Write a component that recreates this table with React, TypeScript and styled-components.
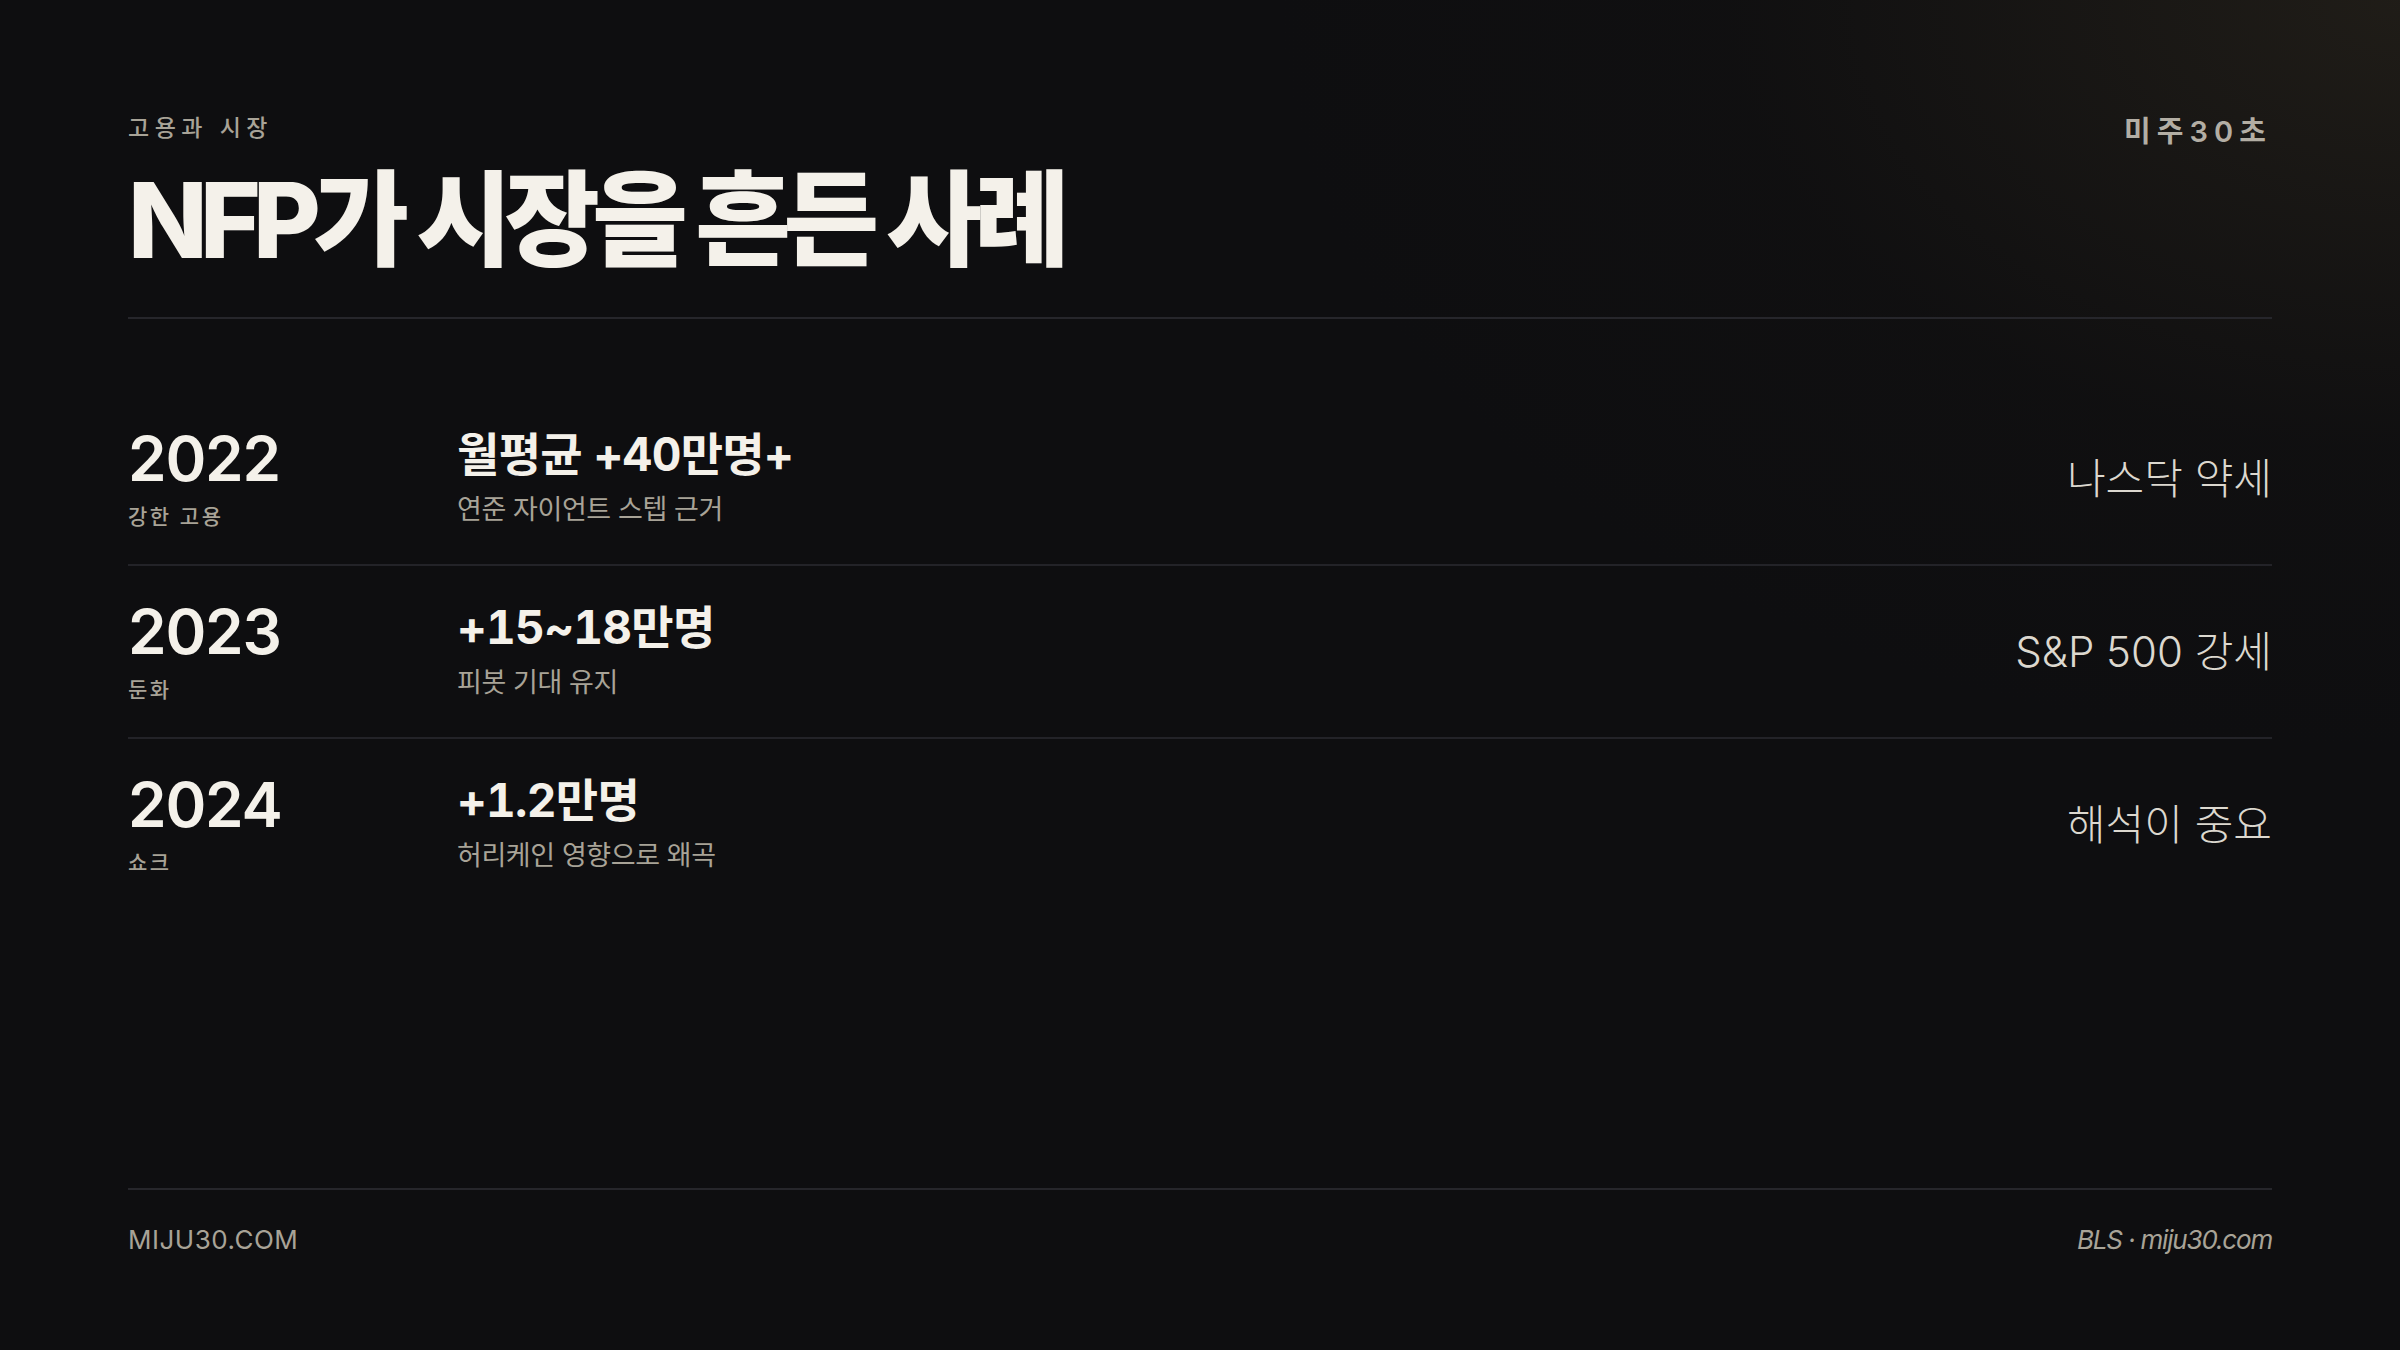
import React from "react";
import styled, { createGlobalStyle } from "styled-components";

const GlobalStyle = createGlobalStyle`
  * { box-sizing: border-box; }
  html, body { margin: 0; padding: 0; background: #0e0e10; }
  body {
    font-family: Inter, "Noto Sans CJK KR", "Noto Sans", sans-serif;
    -webkit-font-smoothing: antialiased;
  }
`;

const Slide = styled.main`
  width: 100%;
  height: 100vh;
  min-height: 1350px;
  display: flex;
  flex-direction: column;
  padding: 115px 128px 95px;
  background:
    radial-gradient(ellipse 1500px 1000px at 100% 0%, rgba(60, 52, 36, 0.38), rgba(30, 26, 20, 0.12) 45%, rgba(14, 14, 16, 0) 75%),
    #0e0e10;
  color: #f4f1ea;
`;

const Header = styled.header`
  display: flex;
  justify-content: space-between;
  align-items: flex-start;
  padding-bottom: 40px;
  border-bottom: 2px solid #26262b;
`;

const HeaderText = styled.div`
  display: flex;
  flex-direction: column;
  gap: 22px;
`;

const Kicker = styled.div`
  font-size: 23px;
  line-height: 26px;
  font-weight: 500;
  letter-spacing: 0.24em;
  color: #a8a397;
`;

const Title = styled.h1`
  margin: 0;
  font-size: 104px;
  line-height: 114px;
  font-weight: 800;
  letter-spacing: -0.074em;
  color: #f4f1ea;
`;

const Brand = styled.div`
  font-size: 29px;
  line-height: 34px;
  font-weight: 600;
  letter-spacing: 0.21em;
  color: #b3aea4;
`;

const Rows = styled.section`
  margin-top: 74px;
  display: flex;
  flex-direction: column;
`;

const Row = styled.div<{ $last?: boolean }>`
  display: grid;
  grid-template-columns: 329px 1fr auto;
  align-items: center;
  padding: 35px 0;
  border-bottom: ${(p) => (p.$last ? "none" : "2px solid #232328")};
`;

const YearCell = styled.div`
  display: flex;
  flex-direction: column;
  gap: 15px;
`;

const Year = styled.div`
  font-size: 62px;
  line-height: 62px;
  font-weight: 600;
  letter-spacing: -0.02em;
  color: #f4f1ea;
`;

const YearLabel = styled.div`
  font-size: 21px;
  line-height: 24px;
  font-weight: 500;
  letter-spacing: 0.12em;
  color: #a8a397;
`;

const FigureCell = styled.div`
  display: flex;
  flex-direction: column;
  gap: 13px;
`;

const Figure = styled.div`
  font-size: 46px;
  line-height: 49px;
  font-weight: 700;
  letter-spacing: -0.015em;
  font-variant-numeric: tabular-nums;
  color: #f4f1ea;
`;

const Note = styled.div`
  font-size: 27px;
  line-height: 36px;
  font-weight: 400;
  letter-spacing: -0.015em;
  color: #a8a397;
`;

const Outcome = styled.div`
  font-size: 42px;
  line-height: 48px;
  font-weight: 300;
  letter-spacing: 0;
  color: #dcd8cf;
  text-align: right;
`;

const Footer = styled.footer`
  margin-top: auto;
  display: flex;
  justify-content: space-between;
  align-items: center;
  padding-top: 34px;
  border-top: 2px solid #26262b;
`;

const Site = styled.div`
  font-size: 26px;
  line-height: 31px;
  font-weight: 400;
  letter-spacing: 0.02em;
  color: #a8a397;
`;

const Source = styled.div`
  font-size: 26px;
  line-height: 31px;
  font-weight: 400;
  font-style: italic;
  letter-spacing: -0.045em;
  color: #a8a397;
`;

const data = [
  { year: "2022", label: "강한 고용", figure: "월평균 +40만명+", note: "연준 자이언트 스텝 근거", outcome: "나스닥 약세" },
  { year: "2023", label: "둔화", figure: "+15~18만명", note: "피봇 기대 유지", outcome: "S&P 500 강세" },
  { year: "2024", label: "쇼크", figure: "+1.2만명", note: "허리케인 영향으로 왜곡", outcome: "해석이 중요" },
];

export default function App() {
  return (
    <>
      <GlobalStyle />
      <Slide>
        <Header>
          <HeaderText>
            <Kicker>고용과 시장</Kicker>
            <Title>NFP가 시장을 흔든 사례</Title>
          </HeaderText>
          <Brand>미주30초</Brand>
        </Header>
        <Rows>
          {data.map((d, i) => (
            <Row key={d.year} $last={i === data.length - 1}>
              <YearCell>
                <Year>{d.year}</Year>
                <YearLabel>{d.label}</YearLabel>
              </YearCell>
              <FigureCell>
                <Figure>{d.figure}</Figure>
                <Note>{d.note}</Note>
              </FigureCell>
              <Outcome>{d.outcome}</Outcome>
            </Row>
          ))}
        </Rows>
        <Footer>
          <Site>MIJU30.COM</Site>
          <Source>BLS · miju30.com</Source>
        </Footer>
      </Slide>
    </>
  );
}
